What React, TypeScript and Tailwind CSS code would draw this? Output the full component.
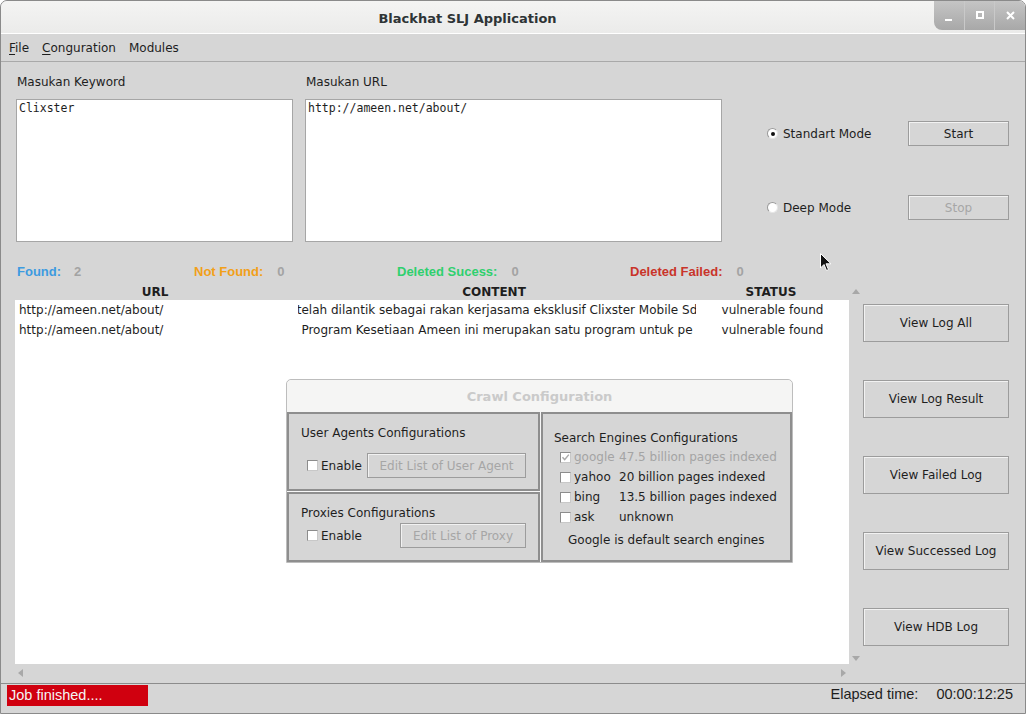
import clsx from "clsx";

const ui = "font-['DejaVu_Sans',sans-serif]";
const arial = "font-['Liberation_Sans',Arial,sans-serif]";

function Checkbox({ checked = false }: { checked?: boolean }) {
  return (
    <span className="relative inline-block w-[11px] h-[11px] shrink-0 bg-white border border-[#8c8c8c] border-r-[#c8c8c8] border-b-[#c8c8c8]">
      {checked && (
        <svg className="absolute left-0 top-0" width="9" height="9" viewBox="0 0 9 9">
          <path d="M1.5 4.3l2.2 2.4L7.8 1.6" fill="none" stroke="#a9a9a9" strokeWidth="1.5" />
        </svg>
      )}
    </span>
  );
}

function Radio({ on = false }: { on?: boolean }) {
  return (
    <span className="relative flex items-center justify-center w-[11px] h-[11px] shrink-0 rounded-full bg-white border border-[#9a9a9a] border-r-[#e6e6e6] border-b-[#e6e6e6]">
      {on && <span className="w-[4px] h-[4px] rounded-full bg-[#111]" />}
    </span>
  );
}

function Btn({ children, disabled = false, className }: { children: React.ReactNode; disabled?: boolean; className?: string }) {
  return (
    <div
      className={clsx(
        "flex items-center justify-center border border-[#9c9c9c] shadow-[inset_1px_1px_0_#f2f2f2] text-[12px] whitespace-nowrap",
        disabled ? "text-[#a6a6a6]" : "text-[#1e1e1e]",
        className
      )}
    >
      {children}
    </div>
  );
}

function Arrow({ dir }: { dir: "up" | "down" | "left" | "right" }) {
  const d = {
    up: "M0 5L4 0L8 5Z",
    down: "M0 0L8 0L4 5Z",
    left: "M5 0L5 8L0 4Z",
    right: "M0 0L5 4L0 8Z",
  }[dir];
  const v = dir === "up" || dir === "down";
  return (
    <svg width={v ? 8 : 5} height={v ? 5 : 8} viewBox={v ? "0 0 8 5" : "0 0 5 8"}>
      <path d={d} fill="#a8a8a8" />
    </svg>
  );
}

const rows = [
  ["http://ameen.net/about/", "telah dilantik sebagai rakan kerjasama eksklusif Clixster Mobile Sd", "vulnerable found"],
  ["http://ameen.net/about/", "Program Kesetiaan Ameen ini merupakan satu program untuk pe", "vulnerable found"],
];

const engines = [
  { name: "google", info: "47.5 billion pages indexed", checked: true, disabled: true },
  { name: "yahoo", info: "20 billion pages indexed" },
  { name: "bing", info: "13.5 billion pages indexed" },
  { name: "ask", info: "unknown" },
];

export default function App() {
  return (
    <div className={clsx(ui, "relative w-[1026px] h-[714px] overflow-hidden flex flex-col bg-[#d6d6d6] border border-[#8a8a8a] rounded-t-[7px] text-[12px] text-[#1e1e1e]")}>
      {/* Title bar */}
      <div className="flex h-[33px] shrink-0 bg-gradient-to-b from-[#f4f4f3] to-[#ebebea] border-b border-white">
        <div className="flex-1 flex items-center justify-center pt-[4px] text-[13px] font-bold text-[#2e3436]">
          Blackhat SLJ Application
        </div>
        <div className="flex w-[91px] h-[30px] -mt-px rounded-bl-[8px] overflow-hidden bg-gradient-to-b from-[#c6c6c6] to-[#a8a8a8]">
          <div className="flex-1 flex items-end justify-center pb-[9px] border-r border-[#c9c9c9]">
            <span className="w-[7px] h-[2px] bg-white" />
          </div>
          <div className="flex-1 flex items-center justify-center border-r border-[#c9c9c9]">
            <span className="w-[8px] h-[8px] border-2 border-white" />
          </div>
          <div className="flex-1 flex items-center justify-center">
            <svg width="9" height="9" viewBox="0 0 9 9">
              <path d="M1 1L8 8M8 1L1 8" stroke="white" strokeWidth="2" />
            </svg>
          </div>
        </div>
      </div>

      {/* Menu bar */}
      <div className="flex items-center gap-[13px] h-[28px] shrink-0 pl-[8px] border-b border-[#a9a9a9]">
        <span><span className="underline underline-offset-2">F</span>ile</span>
        <span><span className="underline underline-offset-2">C</span>onguration</span>
        <span>Modules</span>
      </div>

      {/* Inputs */}
      <div className="flex pl-[15px] pt-[12px]">
        <div className="w-[277px]">
          <div className="h-[16px] leading-[16px] pl-px">Masukan Keyword</div>
          <div className="mt-[9px] h-[143px] bg-white border border-[#a6a6a6] pl-[2px] pt-px leading-[14px] text-[11.5px] font-['DejaVu_Sans_Mono',monospace]">
            Clixster
          </div>
        </div>
        <div className="ml-[12px] w-[417px]">
          <div className="h-[16px] leading-[16px] pl-px">Masukan URL</div>
          <div className="mt-[9px] h-[143px] bg-white border border-[#a6a6a6] pl-[2px] pt-px leading-[14px] text-[11.5px] font-['DejaVu_Sans_Mono',monospace]">
            http://ameen.net/about/
          </div>
        </div>
        <div className="ml-[45px] pt-[47px] flex flex-col gap-[49px]">
          <div className="flex items-center h-[25px]">
            <div className="w-[141px] flex items-center gap-[5px]">
              <Radio on />
              <span>Standart Mode</span>
            </div>
            <Btn className="w-[101px] h-[25px]">Start</Btn>
          </div>
          <div className="flex items-center h-[25px]">
            <div className="w-[141px] flex items-center gap-[5px]">
              <Radio />
              <span>Deep Mode</span>
            </div>
            <Btn disabled className="w-[101px] h-[25px]">Stop</Btn>
          </div>
        </div>
      </div>

      {/* Counters */}
      <div className={clsx(arial, "flex items-center mt-[22px] h-[16px] pl-[16px] text-[13px] font-bold")}>
        <div className="w-[177px] flex gap-[13px]">
          <span className="text-[#3d9be0]">Found:</span>
          <span className="text-[#a3a3a3]">2</span>
        </div>
        <div className="w-[203px] flex gap-[14px]">
          <span className="text-[#f2a019]">Not Found:</span>
          <span className="text-[#a3a3a3]">0</span>
        </div>
        <div className="w-[233px] flex gap-[14px]">
          <span className="text-[#2fd06e]">Deleted Sucess:</span>
          <span className="text-[#a3a3a3]">0</span>
        </div>
        <div className="flex gap-[14px]">
          <span className="text-[#c9342a]">Deleted Failed:</span>
          <span className="text-[#a3a3a3]">0</span>
        </div>
      </div>

      {/* Table + buttons */}
      <div className="flex mt-[5px] pl-[14px]">
        <div className="w-[848px] flex flex-col">
          <div className="flex h-[379px]">
            <div className="w-[834px] flex flex-col">
              <div className="flex h-[15px] leading-[15px] font-bold">
                <div className="w-[280px] text-center">URL</div>
                <div className="w-[398px] text-center">CONTENT</div>
                <div className="w-[156px] text-center">STATUS</div>
              </div>
              <div className="flex-1 bg-white">
                {rows.map((r, i) => (
                  <div key={i} className="flex h-[20px] leading-[20px] whitespace-nowrap">
                    <div className="w-[283px] pl-[4px]">{r[0]}</div>
                    <div className="w-[398px] flex justify-center overflow-hidden">{r[1]}</div>
                    <div className="w-[153px] flex justify-center">{r[2]}</div>
                  </div>
                ))}
              </div>
            </div>
            <div className="w-[14px] flex flex-col items-center justify-between pt-[4px] pb-[3px]">
              <Arrow dir="up" />
              <Arrow dir="down" />
            </div>
          </div>
          <div className="w-[834px] h-[17px] flex items-center justify-between pl-[3px] pr-[3px]">
            <Arrow dir="left" />
            <Arrow dir="right" />
          </div>
        </div>
        <div className="w-[146px] pt-[19px] flex flex-col gap-[38px]">
          {["View Log All", "View Log Result", "View Failed Log", "View Successed Log", "View HDB Log"].map((t) => (
            <Btn key={t} className="h-[38px]">{t}</Btn>
          ))}
        </div>
      </div>

      {/* Status bar */}
      <div className={clsx(arial, "flex mt-[2px] h-[30px] border-t border-[#8c8c8c] text-[14.5px]")}>
        <div className="ml-[6px] mt-px w-[141px] h-[21px] leading-[21px] pl-[2px] bg-[#d0000f] text-[#f4f4f4]">
          Job finished....
        </div>
        <div className="ml-auto flex gap-[18px] pr-[12px] h-[22px] items-center">
          <span>Elapsed time:</span>
          <span>00:00:12:25</span>
        </div>
      </div>

      {/* Crawl Configuration dialog */}
      <div className="absolute left-[285px] top-[378px] w-[507px] h-[184px] flex flex-col border border-[#bdbdbd] rounded-t-[5px] bg-[#f7f7f7]">
        <div className="h-[32px] shrink-0 flex items-center justify-center pt-[2px] text-[13px] font-bold text-[#cacaca] rounded-t-[5px] bg-[#f5f5f4]">
          Crawl Configuration
        </div>
        <div className="flex-1 flex gap-px">
          <div className="w-[253px] flex flex-col gap-px">
            <div className="h-[79px] bg-[#d6d6d6] border-2 border-[#8e8e8e] pt-[11px]">
              <div className="pl-[12px] h-[16px] leading-[16px]">User Agents Configurations</div>
              <div className="mt-[12px] flex items-center pl-[18px] pr-[12px]">
                <Checkbox />
                <span className="ml-[3px]">Enable</span>
                <Btn disabled className="ml-auto w-[159px] h-[25px]">Edit List of User Agent</Btn>
              </div>
            </div>
            <div className="flex-1 bg-[#d6d6d6] border-2 border-[#8e8e8e] pt-[11px]">
              <div className="pl-[12px] h-[16px] leading-[16px]">Proxies Configurations</div>
              <div className="mt-[2px] flex items-center pl-[18px] pr-[12px]">
                <Checkbox />
                <span className="ml-[3px]">Enable</span>
                <Btn disabled className="ml-auto w-[126px] h-[25px]">Edit List of Proxy</Btn>
              </div>
            </div>
          </div>
          <div className="flex-1 bg-[#d6d6d6] border-2 border-[#8e8e8e] pt-[16px]">
            <div className="pl-[11px] h-[16px] leading-[16px]">Search Engines Configurations</div>
            <div className="mt-px pl-[17px]">
              {engines.map((e) => (
                <div key={e.name} className={clsx("flex items-center h-[20px]", e.disabled && "text-[#a4a4a4]")}>
                  <Checkbox checked={e.checked} />
                  <span className="ml-[3px] w-[45px]">{e.name}</span>
                  <span>{e.info}</span>
                </div>
              ))}
            </div>
            <div className="mt-[5px] pl-[25px] h-[16px] leading-[16px]">Google is default search engines</div>
          </div>
        </div>
      </div>

      {/* Mouse pointer */}
      <svg className="absolute left-[819px] top-[252px]" width="12" height="19" viewBox="0 0 12 19">
        <path d="M0.5 0.5L0.5 15L4 11.5L6.5 17.5L8.5 16.6L6 10.8L11 10.8Z" fill="#111" stroke="#fff" strokeWidth="1" />
      </svg>
    </div>
  );
}
